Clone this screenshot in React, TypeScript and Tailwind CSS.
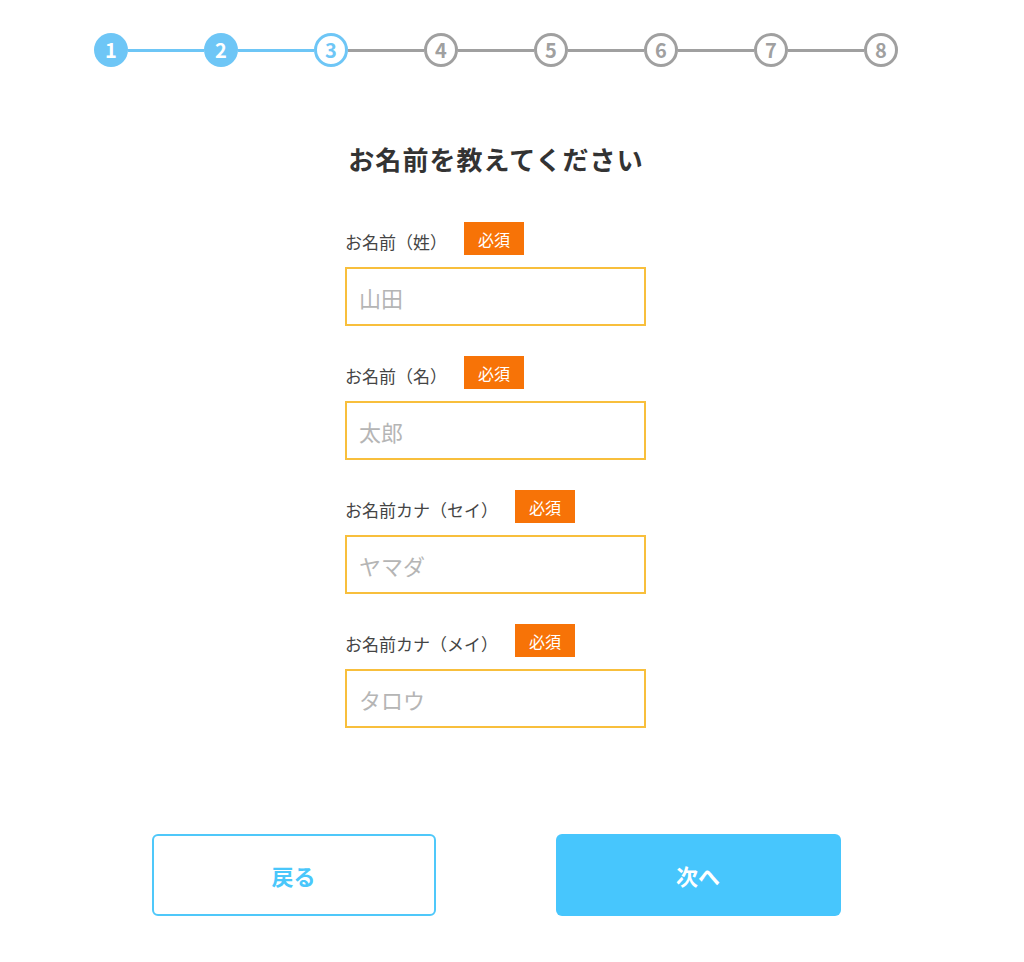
import React, { useState } from 'react';

const font = { fontFamily: '"Noto Sans CJK JP", "Noto Sans", sans-serif' };

const STEPS = [1, 2, 3, 4, 5, 6, 7, 8];
const CURRENT = 3;

const FIELDS = [
  { key: 'sei', label: 'お名前（姓）', placeholder: '山田' },
  { key: 'mei', label: 'お名前（名）', placeholder: '太郎' },
  { key: 'seiKana', label: 'お名前カナ（セイ）', placeholder: 'ヤマダ' },
  { key: 'meiKana', label: 'お名前カナ（メイ）', placeholder: 'タロウ' },
];

const Stepper: React.FC = () => (
  <div className="flex items-center justify-center pt-[33px]">
    {STEPS.map((n, i) => {
      const done = n < CURRENT;
      const active = n === CURRENT;
      return (
        <React.Fragment key={n}>
          {i > 0 && (
            <div className={`w-[76px] h-[3px] ${n <= CURRENT ? 'bg-[#6ec6f6]' : 'bg-[#a0a0a0]'}`} />
          )}
          <div
            className={`w-[34px] h-[34px] rounded-full flex items-center justify-center text-[20px] font-bold leading-none ${
              done
                ? 'bg-[#6ec6f6] text-white'
                : active
                ? 'border-[3px] border-[#6ec6f6] text-[#6ec6f6] bg-white'
                : 'border-[3px] border-[#a0a0a0] text-[#a0a0a0] bg-white'
            }`}
          >
            {n}
          </div>
        </React.Fragment>
      );
    })}
  </div>
);

export default function App() {
  const [values, setValues] = useState<Record<string, string>>({});

  return (
    <div className="w-[992px] min-h-[962px] bg-white" style={font}>
      <Stepper />

      <h1 className="mt-[74px] text-center text-[26px] leading-[36px] font-bold text-[#333333] tracking-[0.04em]">
        お名前を教えてください
      </h1>

      <div className="w-[301px] ml-[345px] mt-[45px]">
        {FIELDS.map((f, i) => (
          <div key={f.key} className={i > 0 ? 'mt-[30px]' : ''}>
            <div className="flex items-center h-[33px]">
              <span className="pt-[7px] text-[17px] leading-[24px] text-[#444444]">{f.label}</span>
              <span className="ml-[17px] h-[33px] w-[60px] bg-[#f77307] text-white text-[16px] flex items-center justify-center">
                必須
              </span>
            </div>
            <input
              className="mt-[12px] block w-full h-[59px] border-2 border-[#f8bf3c] px-3 text-[22px] text-[#333333] placeholder:text-[#b5b5b5] outline-none"
              placeholder={f.placeholder}
              value={values[f.key] || ''}
              onChange={e => setValues({ ...values, [f.key]: e.target.value })}
            />
          </div>
        ))}
      </div>

      <div className="flex justify-center gap-[120px] mt-[106px] pb-[44px]">
        <button className="w-[284px] h-[82px] rounded-[6px] border-2 border-[#4fc8fa] bg-white text-[#4ac7fb] text-[22px] font-bold">
          戻る
        </button>
        <button className="w-[285px] h-[82px] rounded-[6px] bg-[#47c6fd] text-white text-[22px] font-bold">
          次へ
        </button>
      </div>
    </div>
  );
}
